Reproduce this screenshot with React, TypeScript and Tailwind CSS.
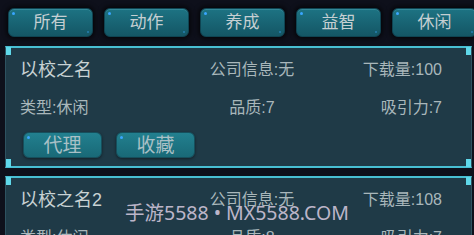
import React from "react";

const tabs = ["所有", "动作", "养成", "益智", "休闲"];

function Tab({ label }: { label: string }) {
  return (
    <div className="relative w-[85px] h-[29px] shrink-0 rounded-[6px] border border-[#0f4452] bg-gradient-to-b from-[#1d7383] to-[#145665] shadow-[0_0_4px_2px_rgba(0,0,0,0.6),inset_0_1px_0_rgba(120,200,215,0.25)] flex items-center justify-center text-[17px] leading-none text-[#c5cfd2]">
      <span className="absolute left-[3px] top-[3px] w-[3px] h-[3px] rounded-full bg-[#3aa6ff]" />
      <span className="absolute right-[3px] bottom-[3px] w-[2px] h-[2px] rounded-full bg-[#2f8fd0] opacity-70" />
      {label}
    </div>
  );
}

function Btn({ label }: { label: string }) {
  return (
    <div className="relative w-[79px] h-[26px] rounded-[6px] border border-[#164f5c] bg-gradient-to-b from-[#22808f] to-[#196977] shadow-[0_1px_3px_rgba(0,0,0,0.45)] flex items-center justify-center text-[19px] leading-none text-[#a9c0c6]">
      <span className="absolute left-[3px] top-[3px] w-[3px] h-[3px] rounded-full bg-[#3aa6ff]" />
      {label}
    </div>
  );
}

function Corners() {
  return (
    <>
      <span className="absolute left-0 top-[-1px] w-[5px] h-[8px] bg-[#5fd8ea]" />
      <span className="absolute right-0 top-[-1px] w-[5px] h-[8px] bg-[#5fd8ea]" />
      <span className="absolute left-0 bottom-[-1px] w-[5px] h-[8px] bg-[#5fd8ea]" />
      <span className="absolute right-0 bottom-[-1px] w-[5px] h-[8px] bg-[#5fd8ea]" />
    </>
  );
}

function Card({ name, dl, quality, attract, buttons }: { name: string; dl: string; quality: string; attract: string; buttons: boolean }) {
  return (
    <div className="relative mx-[5px] w-[467px] bg-[#1f3a47] border-t-2 border-b-2 border-[#48bfd3] border-l border-l-[#2e5260] border-r border-r-[#2e5260] pt-[10px] pb-[8px]">
      <Corners />
      <div className="flex items-center h-[24px] text-[#a9b7bb] text-[16px]">
        <div className="w-[14px]" />
        <div className="w-[164px] text-[18px] text-[#c8d2d4]">{name}</div>
        <div className="w-[136px] text-center">公司信息:无</div>
        <div className="w-[122px] text-right">下载量:{dl}</div>
      </div>
      <div className="flex items-center h-[20px] mt-[16px] text-[#a9b7bb] text-[16px]">
        <div className="w-[14px]" />
        <div className="w-[164px]">类型:休闲</div>
        <div className="w-[136px] text-center">品质:{quality}</div>
        <div className="w-[122px] text-right">吸引力:{attract}</div>
      </div>
      {buttons && (
        <div className="flex gap-[14px] pl-[17px] mt-[14px]">
          <Btn label="代理" />
          <Btn label="收藏" />
        </div>
      )}
    </div>
  );
}

export default function App() {
  return (
    <div
      className="relative w-[474px] h-[235px] overflow-hidden bg-[#0e101b]"
      style={{ fontFamily: '"Liberation Sans", "Noto Sans CJK SC", sans-serif' }}
    >
      <div className="flex gap-[11px] pl-[8px] pt-[8px]">
        {tabs.map((t) => (
          <Tab key={t} label={t} />
        ))}
      </div>
      <div className="mt-[9px] flex flex-col gap-[8px]">
        <Card name="以校之名" dl="100" quality="7" attract="7" buttons />
        <Card name="以校之名2" dl="108" quality="8" attract="7" buttons />
      </div>
      <div
        className="absolute left-[125px] top-[201px] text-[19.5px] leading-[24px] text-[#cdc3d8] opacity-90 whitespace-nowrap"
        style={{ fontFamily: '"Noto Sans", "Noto Sans CJK SC", sans-serif' }}
      >
        手游5588 • MX5588.COM
      </div>
    </div>
  );
}
